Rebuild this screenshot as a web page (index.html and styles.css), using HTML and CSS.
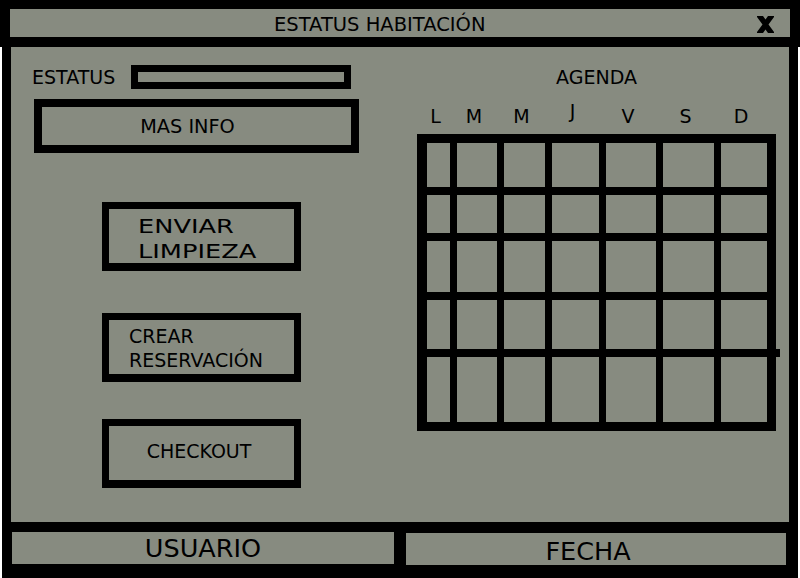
FILE: index.html
```html
<!DOCTYPE html>
<html lang="es">
<head>
    <meta charset="UTF-8">
    <meta name="viewport" content="width=device-width, initial-scale=1.0">
    <title>Estatus Habitación</title>
    <link rel="stylesheet" href="styles.css">
</head>
<body>
    <div class="window-top">
        <div class="title-bar">
            <span class="title">ESTATUS HABITACIÓN</span>
            <svg class="close-icon" width="17" height="17" viewBox="0 0 17 17">
                <path d="M0 0 L6 0 L8.5 3.5 L11 0 L17 0 L17 1 L11.5 8.5 L17 16 L17 17 L11 17 L8.5 13.5 L6 17 L0 17 L0 16 L5.5 8.5 L0 1 Z" fill="#000"/>
            </svg>
        </div>
    </div>

    <div class="window-body">
        <div class="main">
            <div class="left-col">
                <div class="status-row">
                    <span class="status-label">ESTATUS</span>
                    <div class="status-box"></div>
                </div>

                <div class="info-button">MAS INFO</div>

                <div class="action-button clean">
                    <span class="wide">ENVIAR</span>
                    <span class="wide">LIMPIEZA</span>
                </div>

                <div class="action-button reserve">
                    <span>CREAR</span>
                    <span>RESERVACIÓN</span>
                </div>

                <div class="action-button checkout">CHECKOUT</div>
            </div>

            <div class="right-col">
                <div class="agenda-title">AGENDA</div>
                <div class="days">
                    <span>L</span>
                    <span>M</span>
                    <span>M</span>
                    <span class="day-j">J</span>
                    <span>V</span>
                    <span>S</span>
                    <span>D</span>
                </div>
                <div class="calendar">
                    <div class="cell"></div><div class="cell"></div><div class="cell"></div><div class="cell"></div><div class="cell"></div><div class="cell"></div><div class="cell"></div>
                    <div class="cell"></div><div class="cell"></div><div class="cell"></div><div class="cell"></div><div class="cell"></div><div class="cell"></div><div class="cell"></div>
                    <div class="cell"></div><div class="cell"></div><div class="cell"></div><div class="cell"></div><div class="cell"></div><div class="cell"></div><div class="cell"></div>
                    <div class="cell"></div><div class="cell"></div><div class="cell"></div><div class="cell"></div><div class="cell"></div><div class="cell"></div><div class="cell"></div>
                    <div class="cell"></div><div class="cell"></div><div class="cell"></div><div class="cell"></div><div class="cell"></div><div class="cell"></div><div class="cell"></div>
                </div>
            </div>
        </div>

        <div class="footer">
            <div class="footer-box user">USUARIO</div>
            <div class="footer-box date">FECHA</div>
        </div>
    </div>
</body>
</html>
```

FILE: styles.css
```css
body {
    margin: 0;
    background-color: #ffffff;
    font-family: "DejaVu Sans", sans-serif;
    color: #000;
}
.window-top {
    background-color: #000;
    padding: 9px 10px 10px 10px;
}
.title-bar {
    display: flex;
    height: 28px;
    background-color: #878b80;
    padding: 0 16px 0 264px;
}
.title {
    font-size: 19.5px;
    line-height: 24px;
    margin-top: 4px;
}
.close-icon {
    margin-left: auto;
    margin-top: 7px;
}
.window-body {
    margin: 0 2px;
    background-color: #000;
    padding: 0 9px;
}
.main {
    display: flex;
    height: 475px;
    background-color: #878b80;
}
.left-col {
    width: 406px;
    flex: none;
}
.status-row {
    display: flex;
    align-items: center;
    height: 24px;
    margin-top: 18px;
    padding-left: 21px;
}
.status-label {
    width: 99px;
    font-size: 19px;
    line-height: 24px;
}
.status-box {
    box-sizing: border-box;
    width: 220px;
    height: 24px;
    border: 7px solid #000;
}
.info-button {
    box-sizing: border-box;
    width: 325px;
    height: 54px;
    margin: 10px 0 0 23px;
    border: 8px solid #000;
    padding-right: 18px;
    display: flex;
    align-items: center;
    justify-content: center;
    font-size: 19.3px;
}
.action-button {
    box-sizing: border-box;
    width: 199px;
    height: 69px;
    margin-left: 91px;
    border: 7px solid #000;
    border-bottom-width: 8px;
    font-size: 19px;
    display: flex;
    flex-direction: column;
}
.action-button.clean {
    margin-top: 49px;
    padding: 5px 0 0 29px;
    line-height: 25px;
}
.wide {
    display: inline-block;
    transform: scaleX(1.35);
    transform-origin: left center;
}
.action-button.reserve {
    margin-top: 42px;
    padding: 4px 0 0 20px;
    line-height: 24px;
}
.action-button.checkout {
    margin-top: 37px;
    align-items: center;
    justify-content: center;
    padding: 0 5px 5px 0;
}
.right-col {
    width: 359px;
    flex: none;
}
.agenda-title {
    margin-top: 18px;
    text-align: center;
    font-size: 19px;
    line-height: 24px;
}
.days {
    display: grid;
    grid-template-columns: 23px 40px 41px 47px 50px 51px 46px;
    column-gap: 7px;
    padding-left: 7px;
    margin-top: 15px;
    height: 24px;
    font-size: 19px;
    line-height: 24px;
    text-align: center;
}
.day-j {
    margin-top: -5px;
}
.calendar {
    position: relative;
    display: grid;
    grid-template-columns: 23px 40px 41px 47px 50px 51px 46px;
    grid-template-rows: 44px 38px 51px 49px 65px;
    column-gap: 7px;
    row-gap: 8px;
    margin-top: 6px;
    padding: 9px 9px 9px 10px;
    width: 340px;
    background-color: #000;
}
.calendar::after {
    content: '';
    position: absolute;
    right: -4px;
    top: 215px;
    width: 4px;
    height: 8px;
    background-color: #000;
}
.cell {
    background-color: #878b80;
}
.footer {
    display: flex;
    gap: 12px;
    padding: 10px 0 14px 1px;
}
.footer-box {
    flex: none;
    height: 32px;
    background-color: #878b80;
    display: flex;
    align-items: center;
    justify-content: center;
    font-size: 25.5px;
}
.footer-box.user {
    width: 382px;
}
.footer-box.date {
    width: 380px;
    margin-top: 1px;
    padding: 4px 16px 0 0;
    box-sizing: border-box;
}
```
